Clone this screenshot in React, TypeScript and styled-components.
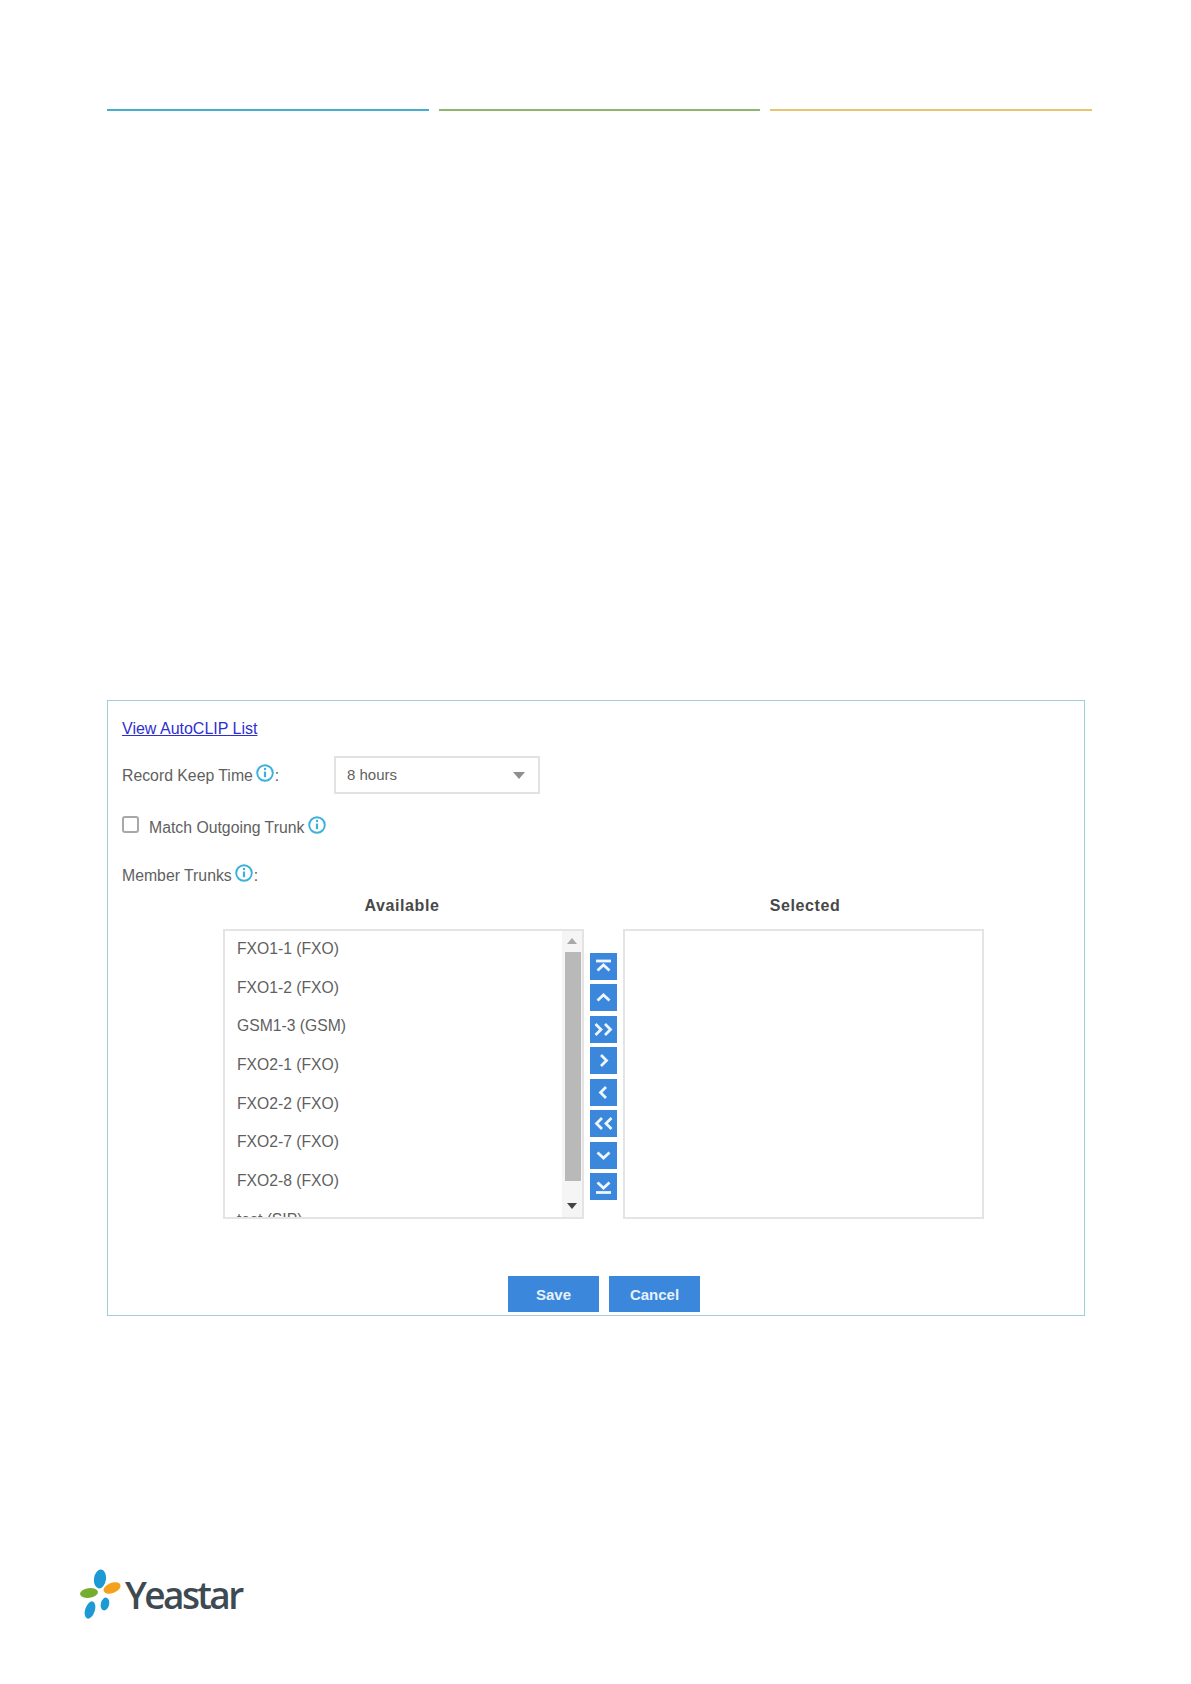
import styled, {createGlobalStyle} from 'styled-components'

const GlobalStyle = createGlobalStyle`
    html, body {
        margin: 0;
        padding: 0;
        background: #fff;
    }

    body {
        font-family: "Liberation Sans", Arial, sans-serif;
    }
`

const trunks = [
    'FXO1-1 (FXO)',
    'FXO1-2 (FXO)',
    'GSM1-3 (GSM)',
    'FXO2-1 (FXO)',
    'FXO2-2 (FXO)',
    'FXO2-7 (FXO)',
    'FXO2-8 (FXO)',
    'test (SIP)',
]

const arrowPaths = [
    ['M6 8H21', 'M7.5 17.5L13.5 12L19.5 17.5'],
    ['M7.5 16.5L13.5 11L19.5 16.5'],
    ['M5.5 8L11 13.5L5.5 19', 'M15 8L20.5 13.5L15 19'],
    ['M11 8L16.5 13.5L11 19'],
    ['M16 8L10.5 13.5L16 19'],
    ['M12 8L6.5 13.5L12 19', 'M21.5 8L16 13.5L21.5 19'],
    ['M7.5 10.5L13.5 16L19.5 10.5'],
    ['M6 19.5H21', 'M7.5 9.5L13.5 15L19.5 9.5'],
]

function InfoIcon() {
    return (
        <InfoSvg viewBox="0 0 18 18" aria-hidden="true">
            <circle cx="9" cy="9" r="7.8" fill="none" stroke="#3cb0dc" strokeWidth="1.9" />
            <path d="M9 7.6V13.2" stroke="#3cb0dc" strokeWidth="2.2" />
            <circle cx="9" cy="5" r="1.2" fill="#3cb0dc" />
        </InfoSvg>
    )
}

function YeastarMark() {
    return (
        <MarkSvg viewBox="0 0 44 50" aria-hidden="true">
            <ellipse cx="20" cy="10" rx="6" ry="9.5" transform="rotate(8 20 10)" fill="#1d9ad6" />
            <ellipse cx="32" cy="19" rx="9" ry="5" transform="rotate(-22 32 19)" fill="#f4a21d" />
            <ellipse cx="9" cy="24" rx="9" ry="4.8" transform="rotate(-8 9 24)" fill="#76ad2f" />
            <ellipse cx="10" cy="41" rx="4.8" ry="9" transform="rotate(18 10 41)" fill="#1d9ad6" />
            <ellipse cx="25" cy="35" rx="4.2" ry="6.5" transform="rotate(12 25 35)" fill="#1d9ad6" />
        </MarkSvg>
    )
}

export default function App() {
    return (
        <Page>
            <GlobalStyle />
            <TopRules>
                <TopRule color="#45aecf" />
                <TopRule color="#8fb66f" />
                <TopRule color="#e6c56e" />
            </TopRules>

            <Panel>
                <AutoClipLink href="#">View AutoCLIP List</AutoClipLink>

                <KeepTimeRow>
                    <KeepTimeLabel>
                        Record Keep Time
                        <InfoIcon />:
                    </KeepTimeLabel>
                    <SelectBox>
                        8 hours
                        <SelectCaret />
                    </SelectBox>
                </KeepTimeRow>

                <CheckRow>
                    <CheckBox />
                    <CheckLabel>Match Outgoing Trunk</CheckLabel>
                    <InfoIcon />
                </CheckRow>

                <MemberLabel>
                    Member Trunks
                    <InfoIcon />:
                </MemberLabel>

                <Transfer>
                    <TransferColumn>
                        <ColumnTitle>Available</ColumnTitle>
                        <ListBox>
                            <ListItems>
                                {trunks.map((trunk) => (
                                    <ListItem key={trunk}>{trunk}</ListItem>
                                ))}
                            </ListItems>
                            <ScrollTrack>
                                <ScrollArrow direction="up" />
                                <ScrollThumb />
                                <ScrollArrow direction="down" />
                            </ScrollTrack>
                        </ListBox>
                    </TransferColumn>

                    <ArrowButtons>
                        {arrowPaths.map((paths) => (
                            <ArrowButton key={paths.join()}>
                                <svg width="27" height="27" viewBox="0 0 27 27" aria-hidden="true">
                                    {paths.map((d) => (
                                        <path key={d} d={d} fill="none" stroke="#eef5fd" strokeWidth="2.8" />
                                    ))}
                                </svg>
                            </ArrowButton>
                        ))}
                    </ArrowButtons>

                    <TransferColumn>
                        <SelectedTitle>Selected</SelectedTitle>
                        <ListBox />
                    </TransferColumn>
                </Transfer>

                <Actions>
                    <ActionButton>Save</ActionButton>
                    <ActionButton>Cancel</ActionButton>
                </Actions>
            </Panel>

            <Logo>
                <YeastarMark />
                <LogoName>Yeastar</LogoName>
            </Logo>
        </Page>
    )
}

const Page = styled.div`
    width: 1191px;
    height: 1684px;
    padding: 109px 0 0 107px;
    box-sizing: border-box;
    color: #5f5f5f;
    font-size: 15.8px;
`

const TopRules = styled.div`
    display: flex;
    gap: 10px;
    width: 984.5px;
`

const TopRule = styled.div`
    flex: 1;
    height: 2px;
    background: ${(props) => props.color};
`

const Panel = styled.section`
    box-sizing: border-box;
    width: 978px;
    height: 616px;
    margin-top: 589px;
    padding: 18px 14px 0;
    border: 1px solid #9fd0d8;
    display: flex;
    flex-direction: column;
    align-items: flex-start;
`

const AutoClipLink = styled.a`
    color: #2f2fd0;
    font-size: 16px;
    line-height: 20px;
`

const KeepTimeRow = styled.div`
    display: flex;
    align-items: center;
    margin-top: 17px;
`

const KeepTimeLabel = styled.div`
    display: flex;
    align-items: center;
    width: 212px;
    padding-top: 2px;
`

const InfoSvg = styled.svg`
    width: 18px;
    height: 18px;
    margin: -7px 1px 0 3px;
`

const SelectBox = styled.div`
    box-sizing: border-box;
    width: 206px;
    height: 38px;
    padding: 0 13px 2px 11px;
    border: 2px solid #e2e2e2;
    display: flex;
    align-items: center;
    justify-content: space-between;
    font-size: 15px;
`

const SelectCaret = styled.span`
    width: 0;
    height: 0;
    margin-top: 2px;
    border-left: 6.5px solid transparent;
    border-right: 6.5px solid transparent;
    border-top: 7px solid #8f8f8f;
`

const CheckRow = styled.div`
    display: flex;
    align-items: center;
    margin-top: 22px;
    padding-top: 2px;
    height: 20px;
`

const CheckBox = styled.span`
    box-sizing: border-box;
    width: 17px;
    height: 17px;
    border: 2px solid #a8a8a8;
    border-radius: 3px;
    margin-top: -8px;
`

const CheckLabel = styled.span`
    margin: 0 1px 0 10px;
`

const MemberLabel = styled.div`
    display: flex;
    align-items: center;
    margin-top: 26px;
    padding-top: 2px;
    height: 20px;
`

const Transfer = styled.div`
    display: flex;
    align-items: flex-end;
    gap: 6px;
    margin: 10px 0 0 101px;
`

const TransferColumn = styled.div`
    display: flex;
    flex-direction: column;
    align-items: center;
`

const ColumnTitle = styled.h3`
    margin: 0 3px 13px 0;
    font-size: 16px;
    font-weight: 700;
    letter-spacing: 0.6px;
    line-height: 20px;
    color: #484848;
`

const SelectedTitle = styled(ColumnTitle)`
    margin-right: 0;
    margin-left: 3px;
`

const ListBox = styled.div`
    box-sizing: border-box;
    width: 361px;
    height: 290px;
    border: 2px solid #e4e4e4;
    display: flex;
    overflow: hidden;
`

const ListItems = styled.ul`
    flex: 1;
    list-style: none;
    margin: 0;
    padding: 0 0 0 12px;
`

const ListItem = styled.li`
    height: 38.7px;
    line-height: 36px;
    font-size: 15.7px;
    white-space: nowrap;
`

const ScrollTrack = styled.div`
    width: 20px;
    background: #f5f5f5;
    display: flex;
    flex-direction: column;
    align-items: center;
    padding-top: 7px;
    box-sizing: border-box;
`

const ScrollArrow = styled.span`
    flex: none;
    width: 0;
    height: 0;
    border-left: 5px solid transparent;
    border-right: 5px solid transparent;
    ${(props) =>
        props.direction === 'up' ? 'border-bottom: 6px solid #a8a8a8;' : 'border-top: 6px solid #444;'}
`

const ScrollThumb = styled.div`
    flex: none;
    width: 16px;
    height: 229px;
    margin: 8px 0 22px 1px;
    background: #b9b9b9;
`

const ArrowButtons = styled.div`
    display: flex;
    flex-direction: column;
    gap: 4.5px;
    padding-bottom: 19px;
`

const ArrowButton = styled.div`
    width: 27px;
    height: 27px;
    background: #3a87dc;
`

const Actions = styled.div`
    align-self: stretch;
    display: flex;
    justify-content: flex-start;
    gap: 10px;
    margin: 57px 0 0 386px;
`

const ActionButton = styled.button`
    width: 91px;
    height: 36px;
    padding: 0;
    border: 0;
    background: #3a87dc;
    color: #e6f1fc;
    font: 700 15px "Liberation Sans", Arial, sans-serif;
`

const Logo = styled.div`
    display: flex;
    align-items: center;
    margin: 253px 0 0 -27px;
    width: 170px;
    height: 50px;
`

const MarkSvg = styled.svg`
    width: 44px;
    height: 50px;
    flex: none;
`

const LogoName = styled.span`
    margin: 2px 0 0 1px;
    font-family: "Open Sans", sans-serif;
    font-size: 37px;
    font-weight: 600;
    letter-spacing: -2.6px;
    color: #3e4a52;
    line-height: 50px;
`
